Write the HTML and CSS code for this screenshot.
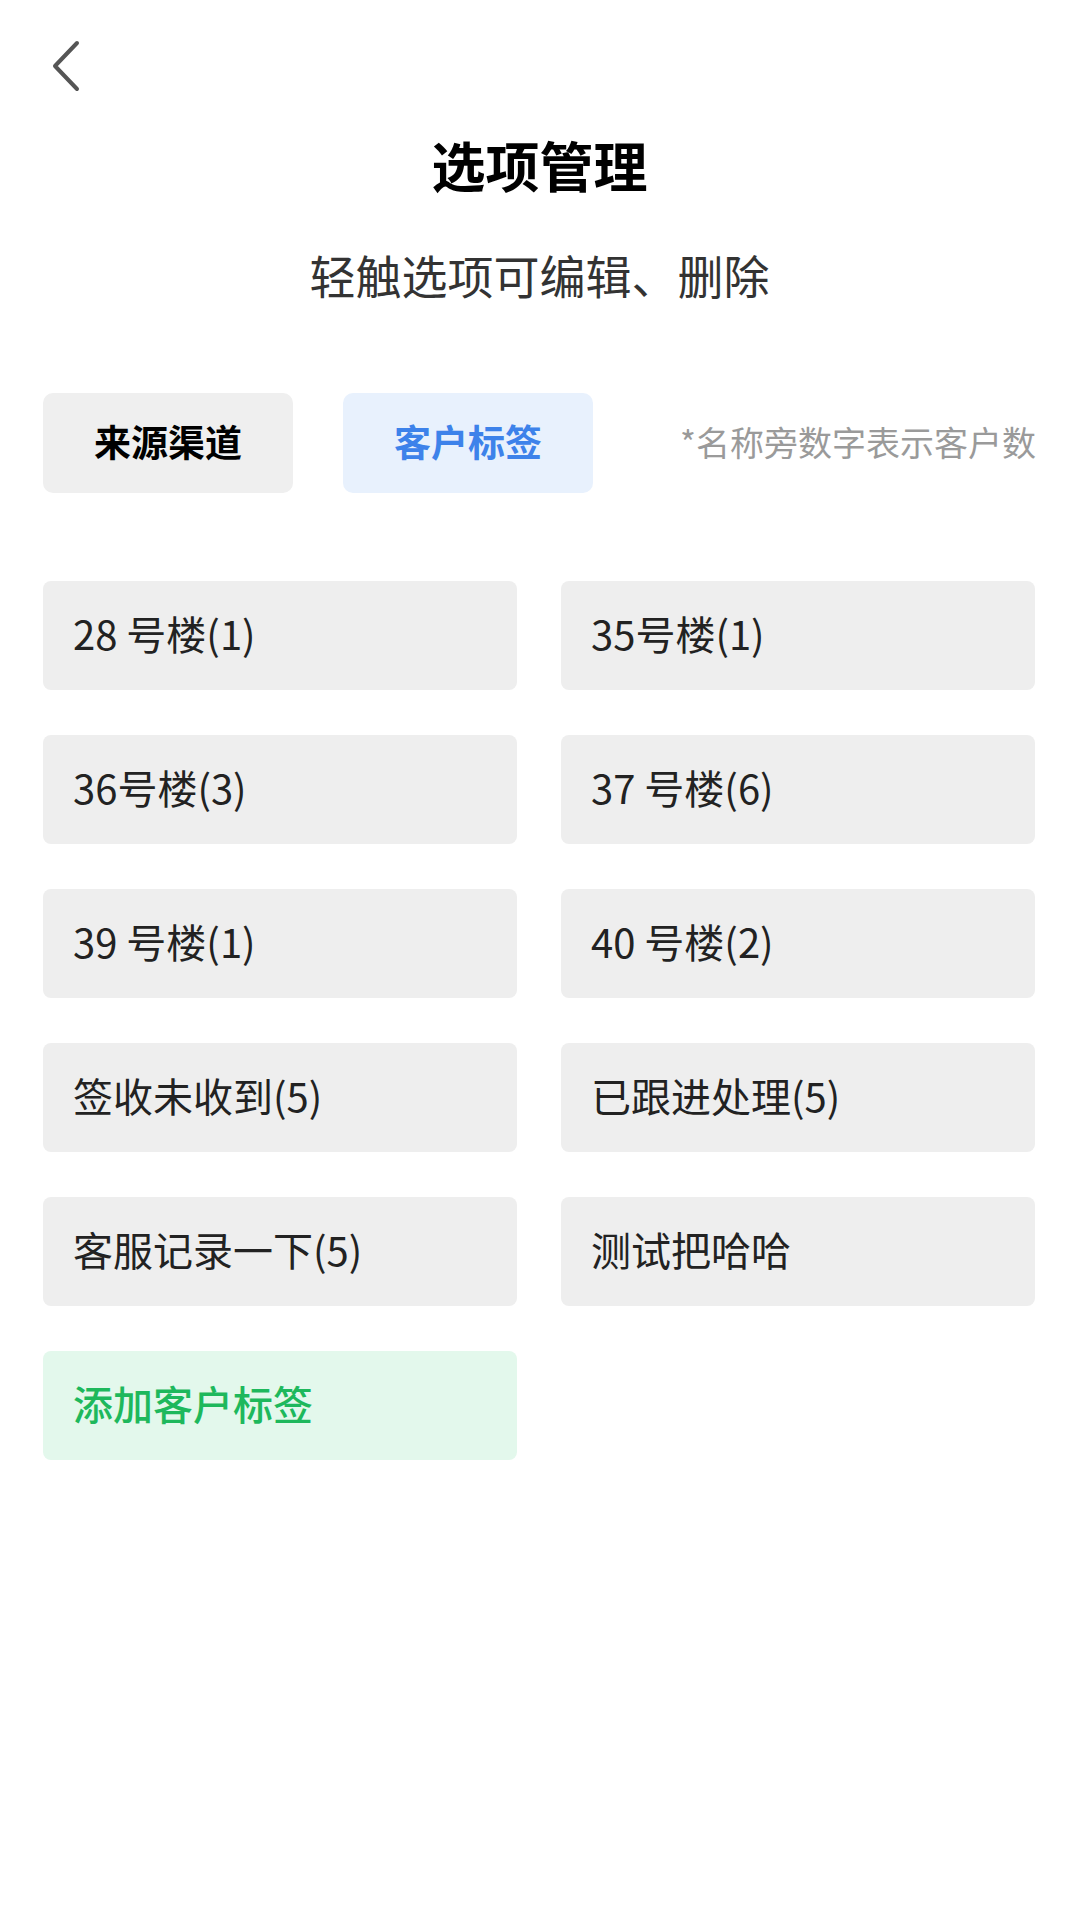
FILE: index.html
```html
<!DOCTYPE html>
<html lang="zh-CN">
<head>
<meta charset="utf-8">
<title>选项管理</title>
<link rel="stylesheet" href="styles.css">
</head>
<body>
<div class="page">
  <div class="topbar">
    <svg class="back" width="32" height="52" viewBox="0 0 32 52">
      <path d="M28 3 L6 26 L28 49" fill="none" stroke="#555" stroke-width="4" stroke-linecap="round" stroke-linejoin="round"/>
    </svg>
  </div>
  <h1 class="title">选项管理</h1>
  <p class="subtitle">轻触选项可编辑、删除</p>
  <div class="tabs">
    <div class="tab">来源渠道</div>
    <div class="tab active">客户标签</div>
    <div class="note">*名称旁数字表示客户数</div>
  </div>
  <div class="grid">
    <div class="item">28 号楼(1)</div>
    <div class="item">35号楼(1)</div>
    <div class="item">36号楼(3)</div>
    <div class="item">37 号楼(6)</div>
    <div class="item">39 号楼(1)</div>
    <div class="item">40 号楼(2)</div>
    <div class="item">签收未收到(5)</div>
    <div class="item">已跟进处理(5)</div>
    <div class="item">客服记录一下(5)</div>
    <div class="item">测试把哈哈</div>
    <div class="item add">添加客户标签</div>
  </div>
</div>
</body>
</html>
```
FILE: styles.css
```css
* { box-sizing: border-box; }
html, body {
  margin: 0;
  padding: 0;
  background: #ffffff;
}
body {
  font-family: "Noto Sans CJK SC", "Noto Sans", sans-serif;
  color: #222;
}
.page {
  width: 1080px;
  min-height: 1920px;
  padding: 0 44px 0 43px;
}
.topbar {
  height: 92px;
  padding-top: 40px;
  padding-left: 6px;
}
.back { display: block; }
.title {
  margin: 41px 0 0;
  font-size: 54px;
  line-height: 64px;
  font-weight: 700;
  text-align: center;
  color: #000;
}
.subtitle {
  margin: 49px 0 0;
  font-size: 46px;
  line-height: 56px;
  text-align: center;
  color: #333;
}
.tabs {
  margin-top: 91px;
  display: flex;
  align-items: center;
  height: 100px;
}
.tab {
  width: 250px;
  height: 100px;
  border-radius: 10px;
  background: #efefef;
  display: flex;
  align-items: center;
  justify-content: center;
  padding-bottom: 4px;
  font-size: 37px;
  font-weight: 700;
  color: #000;
  margin-right: 50px;
}
.tab.active {
  background: #e8f1fd;
  color: #3d82ea;
}
.note {
  margin-left: auto;
  padding-bottom: 4px;
  font-size: 34px;
  color: #9a9a9a;
}
.grid {
  margin-top: 88px;
  display: grid;
  grid-template-columns: 474px 474px;
  column-gap: 44px;
  row-gap: 45px;
}
.item {
  height: 109px;
  border-radius: 8px;
  background: #eeeeee;
  display: flex;
  align-items: center;
  padding-left: 30px;
  padding-bottom: 6px;
  font-size: 40px;
  color: #222;
}
.item.add {
  background: #e3f8ec;
  color: #1eb85c;
  font-weight: 500;
}
```
